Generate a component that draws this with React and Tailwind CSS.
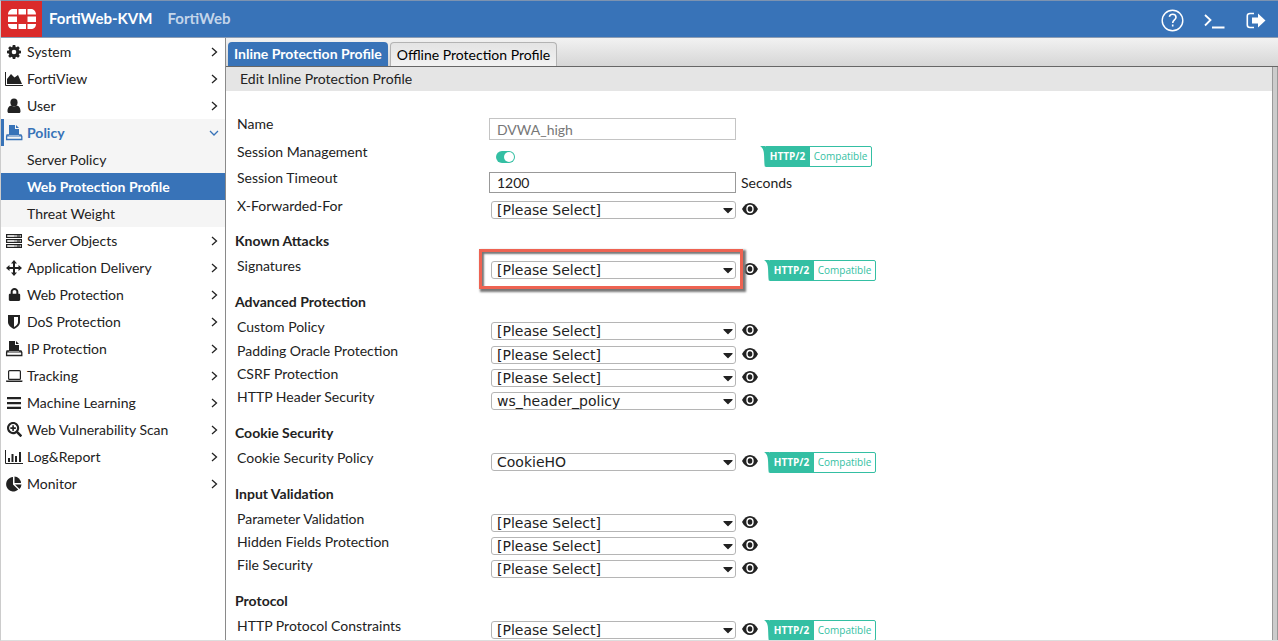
import React from "react";
import { FaLock, FaSearchPlus, FaCaretDown } from "react-icons/fa";

const G = ({ children, w = 18, h = 16 }) => (
  <svg width={w} height={h} viewBox={`0 0 ${w} ${h}`} fill="currentColor" aria-hidden="true">
    {children}
  </svg>
);

const CogIcon = () => (
  <G>
    <circle cx="9" cy="8" r="3.800" fill="none" stroke="currentColor" strokeWidth="3" />
    {[0, 45, 90, 135].map((a) => (
      <path
        key={a}
        transform={`rotate(${a} 9 8)`}
        d="M7.800 1h2.400l.6 2.500H7.200zM7.200 12.500h3.600l-.6 2.500H7.800z"
      />
    ))}
  </G>
);
const AreaIcon = () => (
  <G>
    <path d="M0.500 1v13.500H18" fill="none" stroke="currentColor" strokeWidth="1" />
    <path d="M2 13V8l4-5 3.500 3.500L13 4l4 9z" />
  </G>
);
const UserIcon = () => (
  <G>
    <ellipse cx="9" cy="4.500" rx="3.600" ry="4" />
    <path d="M2.500 13.500c0-4 1.500-5.500 4-6 1.500 1.300 3.500 1.300 5 0 2.500.5 4 2 4 6 0 .8-.5 1.500-1.500 1.500h-10c-1 0-1.500-.7-1.500-1.500z" />
  </G>
);
const PolicyIcon = () => (
  <G>
    <path d="M4 0h6v4h4v6H4z" />
    <path d="M11 0l3 3h-3z" />
    <path d="M4 10H2l-.4 1.500v3h15.200v-3L16 10h-2" fill="none" stroke="currentColor" strokeWidth="1.300" />
    <path d="M1.500 10.500h15.300v1H1.500z" />
  </G>
);
const ServerIcon = () => (
  <G>
    {[1, 6, 11].map((y) => (
      <g key={y}>
        <rect x="1.500" y={y + 0.5} width="15" height="3" fill="#aaa" stroke="currentColor" />
        <path d={`M3 ${y + 2}h6`} stroke="#fff" />
        <path d={`M12 ${y + 2}h3`} stroke="currentColor" />
      </g>
    ))}
  </G>
);
const MoveIcon = () => (
  <G>
    <path d="M9 0l3 3.500h-2V7h3.500V5L17 8l-3.500 3V9H10v3.500h2L9 16l-3-3.500h2V9H4.500v2L1 8l3.500-3v2H8V3.500H6z" />
  </G>
);
const ShieldIcon = () => (
  <G>
    <path fillRule="evenodd" d="M3 1h12v7c0 3.500-3 5.500-6 7-3-1.500-6-3.500-6-7zM9 3v10c2.500-1.300 4-2.800 4-5V3z" />
  </G>
);
const LaptopIcon = () => (
  <G>
    <rect x="3.600" y="2.600" width="11.800" height="8.800" rx="1" fill="none" stroke="currentColor" strokeWidth="1.200" />
    <path d="M1 12.500h16.500v.8c0 .5-.5.7-1 .7H2c-.5 0-1-.2-1-.7z" />
  </G>
);
const BarsIcon = () => (
  <G>
    <path d="M2 2h14v2.300H2zM2 6.900h14v2.300H2zM2 11.800h14v2.300H2z" />
  </G>
);
const ChartIcon = () => (
  <G>
    <path d="M0.500 1v13.500H18" fill="none" stroke="currentColor" strokeWidth="1" />
    <path d="M3 9h2v4H3zM6.500 5h2v8h-2zM10 7h2v6h-2zM14 3h2v10h-2z" />
  </G>
);
const PieIcon = () => (
  <G>
    <path d="M8 1v7.500l5.200 5A7.200 7.200 0 1 1 8 1z" />
    <path d="M9.500 0.500A7 7 0 0 1 16 7H9.500z" />
    <path d="M10 8.500h6.500a7 7 0 0 1-2 4.500z" />
  </G>
);
const Chevron = ({ open }) => (
  <svg width="10" height="10" viewBox="0 0 10 10" fill="none" stroke="currentColor" strokeWidth="1.300" aria-hidden="true">
    <path d={open ? "M1 3l4 4 4-4" : "M3 1l4.500 4L3 9"} />
  </svg>
);

const MENU = [
  ["System", CogIcon],
  ["FortiView", AreaIcon],
  ["User", UserIcon],
  ["Policy", PolicyIcon],
  ["Server Objects", ServerIcon],
  ["Application Delivery", MoveIcon],
  ["Web Protection", () => <FaLock size={13} />],
  ["DoS Protection", ShieldIcon],
  ["IP Protection", PolicyIcon],
  ["Tracking", LaptopIcon],
  ["Machine Learning", BarsIcon],
  ["Web Vulnerability Scan", () => <FaSearchPlus size={15} />],
  ["Log&Report", ChartIcon],
  ["Monitor", PieIcon],
];

const Sidebar = () => (
  <nav className="w-[225px] shrink-0 border-r border-[#8a8a8a] bg-white">
    <ul>
      {MENU.map(([name, Icon]) => {
        const open = name === "Policy";
        return (
          <li key={name} className={open ? "bg-[#f5f5f5]" : ""}>
            <a
              href="#"
              className={
                "flex h-[27px] items-center pr-[6px] " +
                (open
                  ? "border-l-3 border-[#3873b8] pl-px font-bold text-[#3873b8]"
                  : "pl-1")
              }
            >
              <span className="flex w-[18px] justify-center">
                <Icon />
              </span>
              <span className="ml-1 flex-1">{name}</span>
              <Chevron open={open} />
            </a>
            {open && (
              <ul>
                <li><a href="#" className="flex h-[27px] items-center pl-[26px]">Server Policy</a></li>
                <li><a href="#" className="flex h-[27px] items-center bg-[#3873b8] pl-[26px] font-bold text-white">Web Protection Profile</a></li>
                <li><a href="#" className="flex h-[27px] items-center pl-[26px]">Threat Weight</a></li>
              </ul>
            )}
          </li>
        );
      })}
    </ul>
  </nav>
);

const Badge = ({ className }) => (
  <span className={"flex h-[21px] shrink-0 text-[10px] leading-[19px] font-['Open_Sans',sans-serif] " + className}>
    <svg width="5" height="21" viewBox="0 0 5 21" fill="#34bfa3" aria-hidden="true">
      <path d="M0 0h5v21C4 19 4.500 8 3.500 5 3 2.500 1.500 1 0 0z" />
    </svg>
    <span className="flex w-[107px] rounded-r-xs border border-[#34bfa3] bg-white">
      <span className="w-11 bg-[#34bfa3] pr-px text-center font-bold text-white">HTTP/2</span>
      <span className="flex-1 text-center text-[#34bfa3]">Compatible</span>
    </span>
  </span>
);

const Eye = ({ name }) => (
  <button type="button" aria-label={`View ${name}`} className="ml-[6px] mt-1 flex h-[18px] w-4 items-center">
    <svg width="16" height="12" viewBox="0 0 16 12" aria-hidden="true">
      <path d="M0 6C2 2 4.800 0 8 0s6 2 8 6c-2 4-4.800 6-8 6S2 10 0 6z" fill="#222" />
      <ellipse cx="8" cy="6" rx="3" ry="3.500" fill="none" stroke="#fff" strokeWidth="1.400" />
    </svg>
  </button>
);

const Row = ({ label, id, height = "h-[23px]", children }) => (
  <div className={"flex items-start " + height}>
    <label htmlFor={id} className="w-[252px] shrink-0 leading-5">{label}</label>
    {children}
  </div>
);

const SelectRow = ({ label, value = "[Please Select]", height, badge, highlight }) => {
  const id = label.toLowerCase().replace(/[^a-z]+/g, "-");
  return (
    <Row label={label} id={id} height={height}>
      <span className="relative ml-[2px] mt-[5px] flex h-[18px] w-[245px] shrink-0">
        <select
          id={id}
          className="h-full w-full appearance-none rounded-[3px] border border-[#b5b5b5] bg-white pl-[5px] font-['DejaVu_Sans',sans-serif] text-sm leading-4"
        >
          <option>{value}</option>
        </select>
        <FaCaretDown size={16} className="pointer-events-none absolute right-0 top-px" />
        {highlight && (
          <span className="pointer-events-none absolute -bottom-[10px] -left-3 -right-[7px] -top-3 border-[3px] border-[#ee6352] shadow-[2px_2px_2px_1px_#777,inset_2px_2px_2px_#777]" />
        )}
      </span>
      <Eye name={label} />
      {badge && <Badge className="ml-[6px] mt-1" />}
    </Row>
  );
};

const Section = ({ title, children }) => (
  <section className="mt-[13px]">
    <h2 className="-ml-[2px] mb-[5px] font-bold leading-5">{title}</h2>
    {children}
  </section>
);

export default function App() {
  return (
    <div className="flex h-screen flex-col overflow-hidden border-y border-l border-b-[#ddd] border-l-[#ccc] border-t-[#7d93b0] bg-white font-[Lato,sans-serif] text-sm text-[#222]">
      <header className="flex h-[37px] shrink-0 items-center border-b border-[#8d9db3] bg-[#3873b8] text-white">
        <div className="flex h-full w-[41px] items-center justify-center bg-[#da2a2a]">
          <svg width="28" height="20" viewBox="0 0 28 20" fill="#fff" role="img" aria-label="Fortinet">
            <path d="M5 0h4v5.500H0C0 2.500 2 0 5 0zM10.500 0h7.500v5.500h-7.500zM19.500 0H23c3 0 5 2.500 5 5.500h-8.500zM0 7.500h9v5.500H0zM19.500 7.500H28v5.500h-8.500zM0 15h9v5H5c-3 0-5-2-5-5zM10.500 15h7.500v5h-7.500zM19.500 15H28c0 3-2 5-5 5h-3.500z" />
          </svg>
        </div>
        <span className="ml-[7px] text-[15px] font-bold">FortiWeb-KVM</span>
        <span className="ml-[15px] flex-1 text-[15px] font-bold text-[#c3d5ea]">FortiWeb</span>
        <button type="button" aria-label="Help" className="mr-5 mt-[3px]">
          <svg width="23" height="23" viewBox="0 0 23 23" fill="none" stroke="#fff" strokeWidth="1.400">
            <circle cx="11.500" cy="11.500" r="10.300" />
            <path d="M8.300 7.800c.5-1.700 1.800-2.500 3.300-2.500 2 0 3.400 1.200 3.400 3 0 2.600-3.300 2.600-3.300 5.600M11.700 15.500v2" strokeWidth="1.600" />
          </svg>
        </button>
        <button type="button" aria-label="Console" className="mr-[21px] mt-[3px]">
          <svg width="21" height="16" viewBox="0 0 21 16" fill="none" stroke="#fff" strokeWidth="1.800">
            <path d="M1 2l5.500 5L1 12.500M8 14.500h12.500" />
          </svg>
        </button>
        <button type="button" aria-label="Log out" className="mr-3 mt-[3px]">
          <svg width="20" height="17" viewBox="0 0 20 17" fill="none" stroke="#fff" strokeWidth="1.600">
            <path d="M8 1.500H4C2.300 1.500 1.300 2.500 1.300 4v9c0 1.500 1 2.500 2.700 2.500h4" />
            <path d="M6 5.500h6V1.500l7.500 7-7.500 7v-4H6z" fill="#fff" stroke="none" />
          </svg>
        </button>
      </header>
      <div className="flex min-h-0 flex-1">
        <Sidebar />
        <main className="flex min-w-0 flex-1 flex-col">
          <div className="flex h-[29px] shrink-0 items-end gap-[2px] border-b border-[#666] bg-linear-to-b from-[#f2f2f2] to-[#d6d6d6] pl-[2px]">
            <button type="button" className="h-6 rounded-t bg-[#3873b8] px-[6px] font-bold text-white">
              Inline Protection Profile
            </button>
            <button type="button" className="h-6 rounded-t-sm border border-b-0 border-[#b3b3b3] bg-linear-to-b from-[#e4e4e4] to-[#f2f2f2] px-[6px] text-black">
              Offline Protection Profile
            </button>
          </div>
          <div className="flex min-h-0 flex-1">
            <div className="min-w-0 flex-1 overflow-hidden">
              <h1 className="h-6 bg-[#e5e5e5] pl-[14px] leading-6">Edit Inline Protection Profile</h1>
              <form className="pl-[11px] pt-[23px]">
                <Row label="Name" id="name" height="h-7">
                  <input id="name" disabled defaultValue="DVWA_high" className="mt-1 h-[22px] w-[247px] border border-[#c4c4c4] bg-white px-[7px] text-[#777]" />
                </Row>
                <Row label="Session Management" id="session" height="h-[26px]">
                  <input
                    id="session"
                    type="checkbox"
                    role="switch"
                    defaultChecked
                    className="ml-[7px] mt-[9px] flex h-3 w-[19px] appearance-none justify-end rounded-full bg-[#34bfa3] p-px before:size-[10px] before:rounded-full before:bg-white"
                  />
                  <Badge className="ml-[245px] mt-1" />
                </Row>
                <Row label="Session Timeout" id="timeout" height="h-7">
                  <input id="timeout" defaultValue="1200" className="mt-1 h-[21px] w-[247px] border border-[#999] bg-white px-[7px]" />
                  <span className="ml-[5px] mt-[5px] leading-5">Seconds</span>
                </Row>
                <SelectRow label="X-Forwarded-For" height="h-[22px]" />
                <Section title="Known Attacks">
                  <SelectRow label="Signatures" badge highlight />
                </Section>
                <Section title="Advanced Protection">
                  <SelectRow label="Custom Policy" height="h-6" />
                  <SelectRow label="Padding Oracle Protection" />
                  <SelectRow label="CSRF Protection" />
                  <SelectRow label="HTTP Header Security" value="ws_header_policy" />
                </Section>
                <Section title="Cookie Security">
                  <SelectRow label="Cookie Security Policy" value="CookieHO" badge />
                </Section>
                <Section title="Input Validation">
                  <SelectRow label="Parameter Validation" />
                  <SelectRow label="Hidden Fields Protection" />
                  <SelectRow label="File Security" />
                </Section>
                <Section title="Protocol">
                  <SelectRow label="HTTP Protocol Constraints" badge />
                </Section>
              </form>
            </div>
            <div className="w-[6px] shrink-0 border-x border-[#999] bg-[#ccc]" />
          </div>
        </main>
      </div>
    </div>
  );
}
